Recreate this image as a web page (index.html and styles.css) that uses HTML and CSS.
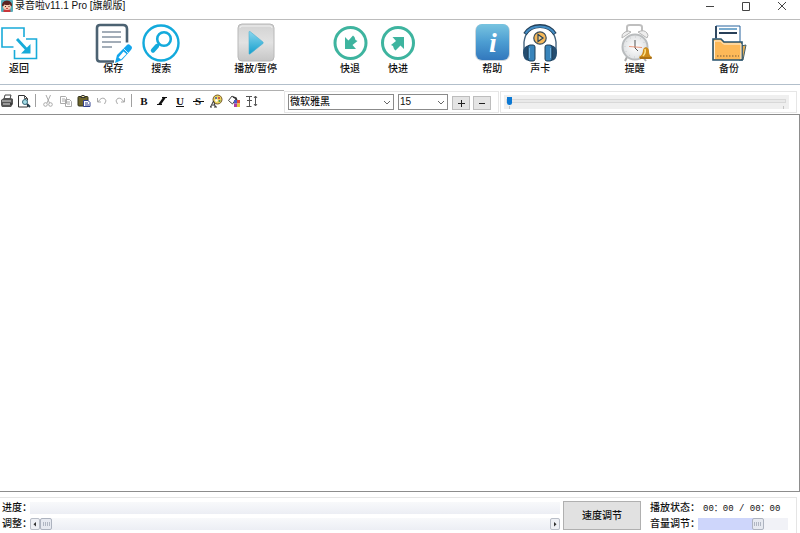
FILE: index.html
```html
<!DOCTYPE html>
<html lang="zh-CN">
<head>
<meta charset="utf-8">
<title>录音啦v11.1 Pro [旗舰版]</title>
<link rel="stylesheet" href="styles.css">
</head>
<body>
<header class="titlebar">
  <svg class="app-icon" viewBox="0 0 12 12" aria-hidden="true">
    <rect width="12" height="12" rx="1" fill="#58aebb"/>
    <path d="M2.500 12v-2q3.500-3 7 0v2z" fill="#c9363a"/>
    <ellipse cx="6" cy="6.500" rx="4" ry="3.500" fill="#f8c9b0"/>
    <path d="M1 6.500q-.5-5.500 5-6 5.500.5 5 6-2-1-2-2-3 1-5.500 0-.5 1.500-2.500 2z" fill="#5c2320"/>
    <path d="M4 6.500h1M7.500 6.500h1" stroke="#432"/>
    <path d="M5 8.500h2" stroke="#c44"/>
  </svg>
  <h1 class="title">录音啦v11.1 Pro [旗舰版]</h1>
  <div class="window-controls">
    <button aria-label="最小化"><svg viewBox="0 0 12 12"><path d="M2 6.500h8"/></svg></button>
    <button aria-label="最大化"><svg viewBox="0 0 12 12"><path d="M2.500 2.500h7v8h-7z"/></svg></button>
    <button aria-label="关闭"><svg viewBox="0 0 12 12"><path d="M2 2l8 8M10 2l-8 8"/></svg></button>
  </div>
</header>

<nav class="toolbar" aria-label="主工具栏">
  <div class="group">
    <button class="tool tool-edge">
      <svg viewBox="0 0 38 42" fill="none" stroke="#18abd9" stroke-width="1.600">
        <path d="M24 17V8H2v19h11.500"/>
        <path d="M26 19h10.500v19.500h-22V30"/>
        <path d="M17 19l11 12" stroke-width="2.800"/>
        <path d="M30.500 24v9.500h-9.500z" fill="#18abd9" stroke="none"/>
      </svg>
      <span>返回</span>
    </button>
  </div>
  <div class="group">
    <button class="tool">
      <svg viewBox="0 0 48 42" fill="none">
        <path d="M25 41.500H11q-3 0-3-3V8q0-3 3-3h23q4 0 4 4v13.500" stroke="#4c6272" stroke-width="2.600"/>
        <path d="M13 12h19M13 17h19M13 22h19M13 27h10" stroke="#a3adb8" stroke-width="2"/>
        <path d="M26 43l2-8 9-9q2-3 4.500-.5 3 2 0 5L33 40z" fill="#13a6ec"/>
        <path d="M29.500 37.500l2.500 2 5.500-5.500-3-2.500z" fill="#fff"/>
        <path d="M34.500 28.500l4.500 4.500" stroke="#fff" stroke-width=".8"/>
      </svg>
      <span>保存</span>
    </button>
    <button class="tool">
      <svg viewBox="0 0 48 42" fill="none" stroke="#13aadc">
        <circle cx="24" cy="23" r="17.500" stroke-width="2.400"/>
        <circle cx="27" cy="19" r="6.800" stroke-width="2.600"/>
        <path d="M22 24l-3 3" stroke-width="2.600"/>
        <path d="M20 26l-4 4.500" stroke-width="4.400" stroke-linecap="round"/>
      </svg>
      <span>搜索</span>
    </button>
  </div>
  <div class="group">
    <button class="tool">
      <svg viewBox="0 0 48 42">
        <defs>
          <linearGradient id="key" x2="0" y2="1"><stop stop-color="#d2d2d2"/><stop offset=".5" stop-color="#e2e2e2"/><stop offset="1" stop-color="#c6c6c6"/></linearGradient>
          <linearGradient id="tri" x2="0" y2="1"><stop stop-color="#8ad6ee"/><stop offset="1" stop-color="#159fcd"/></linearGradient>
        </defs>
        <rect x="6" y="4" width="36" height="37" rx="4" fill="url(#key)" stroke="#b8b8b8"/>
        <path d="M8 8q0-2 2-2h28q2 0 2 2" fill="none" stroke="#f2f2f2"/>
        <path d="M17 12q0-1 1-.5L31 22q.5 1 0 1.500L18 34q-1 .5-1-.5z" fill="url(#tri)" stroke="#4db2d2" stroke-width=".6"/>
      </svg>
      <span>播放/暂停</span>
    </button>
  </div>
  <div class="group">
    <button class="tool">
      <svg viewBox="0 0 48 42">
        <circle cx="24.500" cy="23" r="15.500" fill="none" stroke="#3eb49f" stroke-width="3"/>
        <path d="M19 29V17l3.500 3.500 4.500-5 1.500 1.500 1 3 2 1-5 4 3.500 4z" fill="#3eb49f"/>
      </svg>
      <span>快退</span>
    </button>
    <button class="tool">
      <svg viewBox="0 0 48 42">
        <circle cx="24" cy="23" r="15.500" fill="none" stroke="#3eb49f" stroke-width="3"/>
        <path d="M30 17v12l-3.500-3.500-5 5-1.500-1.500-1-3-2-1 5-4-3.500-4z" fill="#3eb49f"/>
      </svg>
      <span>快进</span>
    </button>
  </div>
  <div class="group">
    <button class="tool">
      <svg viewBox="0 0 48 42">
        <defs><linearGradient id="info" x2="0" y2="1"><stop stop-color="#78c4e0"/><stop offset=".5" stop-color="#4c9dd2"/><stop offset="1" stop-color="#3278bd"/></linearGradient></defs>
        <rect x="7" y="4" width="35" height="37" rx="7" fill="#ccd5db"/>
        <rect x="8" y="4" width="33" height="36" rx="6" fill="url(#info)"/>
        <text class="info-letter" x="25" y="32" text-anchor="middle">i</text>
      </svg>
      <span>帮助</span>
    </button>
    <button class="tool">
      <svg viewBox="0 0 48 42" fill="none">
        <path d="M8 33V22q2-15 16-15.500Q38 7 40 22v11" stroke="#45647e" stroke-width="1.400"/>
        <path d="M9 14Q14 6 24 6t15 8" stroke="#233f58" stroke-width="4"/>
        <path d="M9.500 13.500Q14 6.500 24 6.500t14.500 7" stroke="#448dc4" stroke-width="2"/>
        <path d="M15 25h-2q-6 1-6 8t6 8h2zM33 25h2q6 1 6 8t-6 8h-2z" fill="#244d70"/>
        <rect x="12" y="25" width="7" height="16" rx="2" fill="#3884bb" stroke="#203e57"/>
        <rect x="29" y="25" width="7" height="16" rx="2" fill="#3884bb" stroke="#203e57"/>
        <path d="M13.500 28v10M34.500 28v10" stroke="#71afd9"/>
        <circle cx="24" cy="18" r="6.200" fill="#f6b858" stroke="#394c5b" stroke-width="1.200"/>
        <path d="M22 14.500v7l5-3.500z" fill="#f8cf83" stroke="#294258" stroke-width="1.200"/>
      </svg>
      <span>声卡</span>
    </button>
  </div>
  <div class="group">
    <button class="tool">
      <svg viewBox="0 0 48 42">
        <defs><radialGradient id="dial"><stop stop-color="#fff"/><stop offset="1" stop-color="#dfe1e3"/></radialGradient></defs>
        <path d="M16 13V7q0-2 3-2h9q3 0 3 2v6" fill="none" stroke="#bfbfbf" stroke-width="2"/>
        <path d="M11 18q-1-4 3-6t6 0zM27 12q6-3 9 1 2 2 0 5z" fill="#eee" stroke="#b4b4b4"/>
        <path d="M16 37l-2 4M32 37l3 4" stroke="#aaa" stroke-width="2"/>
        <circle cx="24" cy="27" r="12.500" fill="url(#dial)" stroke="#b9bcbe" stroke-width="2"/>
        <circle cx="24" cy="27" r="10" fill="none" stroke="#c5c8ca" stroke-dasharray="1 4.200"/>
        <path d="M24 20v8l3 3" fill="none" stroke="#555"/>
        <path d="M18 26.500l13 1" stroke="#e47d5c" stroke-width=".8"/>
        <path d="M28 37q4-2 4-7 0-2 3-3 3 1 3 4 0 5 3 6l-1 2H29z" fill="#cc8b1a"/>
        <path d="M32 36q3-3 2-7" stroke="#ffe287" stroke-width="1.500" fill="none"/>
        <path d="M29 38h12" stroke="#8c560f"/>
      </svg>
      <span>提醒</span>
    </button>
  </div>
  <div class="group">
    <button class="tool">
      <svg viewBox="0 0 48 42">
        <path d="M36 26l5-1-3 15h-4z" fill="#e4ad55" stroke="#43606b"/>
        <path d="M11 20V6h24v22" fill="#fff" stroke="#27639d"/>
        <path d="M14 9h18" stroke="#4d8fbe" stroke-width="1.500"/>
        <path d="M14 13h18M11 6v12" stroke="#273f58" stroke-width="1.800"/>
        <path d="M8 40V19h8l3 3h18v18z" fill="#fdb958" stroke="#295470" stroke-width="1.600"/>
        <path d="M9.500 39V21h6l3 3H36v15" fill="none" stroke="#fff2dc"/>
        <path d="M12 36h22" stroke="#a47b43" stroke-width="1.500" stroke-dasharray="1.500 1.500"/>
      </svg>
      <span>备份</span>
    </button>
  </div>
</nav>

<div class="format-row">
  <div class="edit-tools" role="toolbar" aria-label="编辑">
    <button class="mini mini-edge" aria-label="打印"><svg viewBox="0 0 14 14"><path d="M4 5l1-4h6l-1 4" fill="#fff" stroke="#444"/><path d="M1 6l3-2h7l2 1v5l-2 3H2l-1-2z" fill="#555"/><path d="M2 7h9M3 10h7" stroke="#ddd"/><path d="M11 9v2" stroke="#222"/></svg></button>
    <button class="mini" aria-label="打印预览"><svg viewBox="0 0 14 14"><path d="M10.500 11v2h-9V1.500h6l3 3v2" fill="#fff" stroke="#333"/><path d="M7.500 1.500v3h3" fill="none" stroke="#555"/><circle cx="8" cy="8" r="2.500" fill="#a4dce5" stroke="#356879"/><path d="M10 10l3 3" stroke="#223b49" stroke-width="2"/></svg></button>
    <i class="sep"></i>
    <button class="mini" aria-label="剪切"><svg viewBox="0 0 14 14" fill="none" stroke="#aaa"><path d="M5 1l3.500 8M9.500 1L6 9"/><circle cx="4.500" cy="10.500" r="1.800"/><circle cx="9.500" cy="10.500" r="1.800"/></svg></button>
    <button class="mini" aria-label="复制"><svg viewBox="0 0 14 14" fill="#fff" stroke="#aaa"><path d="M1.500 2.500h5l1 1v6h-6zM6.500 5.500h4l2 2v5h-6z"/><path d="M3 5h3M3 7h3M8 8h3M8 10h3"/></svg></button>
    <button class="mini" aria-label="粘贴"><svg viewBox="0 0 14 14"><rect x="1" y="2.500" width="10" height="9.500" rx="1" fill="#6d652c" stroke="#333219"/><path d="M4 3.500V2h1l1-1 1 1h1v1.500z" fill="#eee5a0" stroke="#333"/><path d="M6.500 6.500H11l2 2v4H6.500z" fill="#fff" stroke="#304090"/><path d="M8 9h3M8 11h4" stroke="#304090"/></svg></button>
    <button class="mini" aria-label="撤销"><svg viewBox="0 0 14 14" fill="none" stroke="#aaa"><path d="M2.500 4v4H6M3 8q3-5 6.500-3.500 3 2 0 5.500"/></svg></button>
    <button class="mini" aria-label="重做"><svg viewBox="0 0 14 14" fill="none" stroke="#aaa"><path d="M11.500 4v4H8M11 8Q8 3 4.500 4.500q-3 2 0 5.500"/></svg></button>
    <i class="sep"></i>
    <button class="mini letter" aria-label="加粗"><b>B</b></button>
    <button class="mini" aria-label="斜体"><svg viewBox="0 0 14 14" fill="none" stroke="#111"><path d="M7 3.500h5M2 10.500h5"/><path d="M9.500 3.500l-5 7" stroke-width="2.400"/></svg></button>
    <button class="mini letter" aria-label="下划线"><u>U</u></button>
    <button class="mini letter" aria-label="删除线"><span class="strike">S</span></button>
    <button class="mini" aria-label="文字颜色"><svg viewBox="0 0 14 14"><ellipse cx="8.500" cy="5.500" rx="4.500" ry="4.500" fill="#ecd45d" stroke="#75592c"/><circle cx="7" cy="4" r="1" fill="#3658b0"/><circle cx="10" cy="4" r="1" fill="#c53842"/><circle cx="10.500" cy="7" r="1" fill="#43905a"/><circle cx="7.500" cy="6.500" r="1.300" fill="#fff"/><path d="M1.500 13l3-6 2 6M3 11h3M1 13h2M5 13h3" fill="none" stroke="#333"/></svg></button>
    <button class="mini" aria-label="填充颜色"><svg viewBox="0 0 14 14"><path d="M1.500 6.500L5 2l4 3-3.500 5z" fill="#fff" stroke="#444"/><path d="M6 3l3 1 1 3" fill="none" stroke="#333" stroke-width="1.500"/><path d="M7 6h3v3.500H7z" fill="#4b5bc5"/><path d="M10 6h3v3.500h-3z" fill="#df4b37"/><path d="M7 9.500h3V13H7z" fill="#b23f9c"/><path d="M10 9.500h3V13h-3z" fill="#e7c93f"/></svg></button>
    <button class="mini" aria-label="行距"><svg viewBox="0 0 14 14" fill="none" stroke="#555"><path d="M1 2.500h6M2 6.500h5M4.500 3v9M1.500 12.500h5M10.500 2v10M9 4l1.500-2L12 4M9 10l1.500 2 1.500-2"/></svg></button>
  </div>
  <div class="panel font-panel">
    <span class="combo combo-font">
      <select aria-label="字体"><option>微软雅黑</option></select>
      <svg viewBox="0 0 8 6"><path d="M1 1l3 3 3-3"/></svg>
    </span>
    <span class="combo combo-size">
      <select aria-label="字号"><option>15</option></select>
      <svg viewBox="0 0 8 6"><path d="M1 1l3 3 3-3"/></svg>
    </span>
    <button class="step" aria-label="增大字号"><svg viewBox="0 0 8 8"><path d="M1 4.500h7M4.500 1v7"/></svg></button>
    <button class="step" aria-label="减小字号"><svg viewBox="0 0 8 8"><path d="M1 4.500h6"/></svg></button>
  </div>
  <div class="panel zoom-panel">
    <input class="zoom" type="range" min="0" max="100" value="0" aria-label="缩放">
  </div>
</div>

<textarea class="editor" aria-label="文本内容"></textarea>

<footer class="player">
  <div class="tracks">
    <label for="progress">进度：</label>
    <progress id="progress" class="bar" value="0" max="100"></progress>
    <label for="seek">调整：</label>
    <div class="bar seek">
      <button class="arrow" aria-label="向左"><svg viewBox="0 0 8 8"><path d="M5 2v4.500L2.500 4.250z"/></svg></button>
      <input id="seek" type="range" min="0" max="100" value="0">
      <button class="arrow" aria-label="向右"><svg viewBox="0 0 8 8"><path d="M3 2v4.500l2.500-2.250z"/></svg></button>
    </div>
  </div>
  <button class="speed">速度调节</button>
  <div class="status">
    <span>播放状态：</span>
    <output class="time">00：00 / 00：00</output>
    <label for="volume">音量调节：</label>
    <input id="volume" class="bar volume" type="range" min="0" max="100" value="69">
  </div>
</footer>
</body>
</html>
```

FILE: styles.css
```css
* {
  box-sizing: border-box;
}

body {
  display: flex;
  flex-direction: column;
  height: 100vh;
  margin: 0;
  overflow: hidden;
  background: #fff;
  color: #111;
  font: 10px/12px "Liberation Sans", "Noto Sans CJK SC", sans-serif;
}

button,
input,
select,
textarea {
  margin: 0;
  padding: 0;
  border: 0;
  background: none;
  color: inherit;
  font: inherit;
}

/* Title bar */
.titlebar {
  display: flex;
  align-items: flex-start;
  height: 20px;
  border-bottom: 1px solid #bcbcbc;
}

.app-icon {
  width: 12px;
  height: 12px;
  margin: 0 2px 0 1px;
}

.title {
  margin: 0;
  font-size: 10px;
  font-weight: 400;
  white-space: nowrap;
}

.window-controls {
  display: flex;
  margin-left: auto;
}

.window-controls button {
  width: 36px;
  height: 12px;
}

.window-controls svg {
  display: block;
  width: 12px;
  height: 12px;
  margin: 0 auto;
  fill: none;
  stroke: #444;
}

/* Main toolbar */
.toolbar {
  display: flex;
  justify-content: space-between;
  height: 65px;
  padding-right: 47px;
  border-bottom: 1px solid #b2bfcb;
}

.group {
  display: flex;
}

.tool {
  display: flex;
  flex-direction: column;
  align-items: center;
  width: 48px;
  font-weight: 500;
  white-space: nowrap;
}

.tool-edge {
  width: 43px;
  padding-right: 5px;
}

.tool svg {
  width: 100%;
  height: 42px;
  margin-bottom: 1px;
  overflow: visible;
}

.info-letter {
  fill: #fff;
  font: italic bold 28px "Liberation Serif", serif;
}

/* Formatting row */
.format-row {
  display: flex;
  height: 29px;
  padding: 5px 3px 0 0;
}

.edit-tools {
  display: flex;
  align-items: flex-start;
  width: 284px;
  padding-top: 3px;
  border-top: 1px solid #b0b0b0;
}

.mini {
  width: 18px;
  height: 14px;
}

.mini-edge {
  width: 15px;
}

.mini svg {
  display: block;
  width: 14px;
  height: 14px;
  margin: 0 auto;
}

.mini-edge svg {
  margin: 0;
}

.sep {
  width: 1px;
  height: 13px;
  margin: 0 3px 0 2px;
  background: #a0a0a0;
}

.letter {
  font: bold 11px/13px "Liberation Serif", serif;
}

.strike {
  display: inline-block;
  width: 11px;
  background: linear-gradient(#111, #111) center / 100% 1px no-repeat;
}

.panel {
  display: flex;
  align-items: center;
  height: 22px;
  margin-top: 1px;
  border: 1px solid #e6e6e6;
}

.font-panel {
  width: 215px;
  padding-left: 3px;
  gap: 4px;
}

.combo {
  position: relative;
  height: 16px;
}

.combo-font {
  width: 106px;
}

.combo-size {
  width: 50px;
}

.combo select {
  appearance: none;
  display: block;
  width: 100%;
  height: 16px;
  padding: 0 1px;
  border: 1px solid #8b8b8b;
  border-radius: 0;
  font-weight: 500;
  line-height: 14px;
}

.combo svg {
  position: absolute;
  top: 6px;
  right: 3px;
  width: 8px;
  height: 6px;
  fill: none;
  stroke: #666;
  pointer-events: none;
}

.step {
  display: grid;
  place-items: center;
  width: 18px;
  height: 14px;
  margin-top: 2px;
  border: 1px solid #bdbdbd;
  background: #e4e4e4;
}

.step + .step {
  margin-left: -1px;
}

.step svg {
  width: 8px;
  height: 8px;
  fill: none;
  stroke: #222;
}

.zoom-panel {
  flex: 1;
  margin-left: 1px;
  padding: 0 7px 0 3px;
}

.zoom {
  appearance: none;
  width: 100%;
  height: 14px;
  background:
    linear-gradient(#c4c4c4, #c4c4c4) 5px 11px / 1px 3px no-repeat,
    linear-gradient(#c4c4c4, #c4c4c4) right 5px top 11px / 1px 3px no-repeat,
    #efefef;
}

.zoom::-webkit-slider-runnable-track {
  height: 4px;
  margin: 0 3px 3px 2px;
  border: 1px solid #d8d8d8;
  background: #e9e9e9;
}

.zoom::-webkit-slider-thumb {
  appearance: none;
  width: 5px;
  height: 8px;
  margin-top: -3px;
  border-radius: 0 0 3px 3px;
  background: #0b78d3;
}

/* Document area */
.editor {
  flex: 1;
  min-height: 0;
  padding: 4px;
  border: solid #8d8d8d;
  border-width: 1px 1px 1px 0;
  outline: 0;
  resize: none;
}

/* Player controls */
.player {
  display: flex;
  height: 36px;
  margin: 5px 3px 0 0;
  border: 1px solid #e5e5e5;
  border-width: 1px 1px 0 0;
}

.tracks {
  display: grid;
  flex: 1;
  grid-template-columns: 28px 1fr;
  grid-auto-rows: 12px;
  align-content: start;
  row-gap: 4px;
  padding: 4px 3px 0 2px;
}

.tracks label,
.status label,
.status span {
  font-weight: 500;
  white-space: nowrap;
}

.bar {
  width: 100%;
  height: 12px;
  background: linear-gradient(#f8f9fb, #eceef4);
}

progress {
  appearance: none;
  border: 0;
}

progress::-webkit-progress-bar {
  background: transparent;
}

.seek {
  display: flex;
}

.seek input {
  appearance: none;
  flex: 1;
  min-width: 0;
  height: 12px;
}

.arrow {
  width: 10px;
  height: 12px;
  border: 1px solid #b9bec8;
  border-radius: 2px;
  background: #eef0f5;
}

.arrow svg {
  display: block;
  width: 8px;
  height: 8px;
  fill: #333;
}

.seek input::-webkit-slider-thumb,
.volume::-webkit-slider-thumb {
  appearance: none;
  width: 12px;
  height: 12px;
  border: 1px solid #adb3bf;
  border-radius: 2px;
  background:
    repeating-linear-gradient(90deg, #b0b6c2 0 1px, transparent 1px 2px) center / 7px 4px no-repeat,
    #e6e9f0;
}

.speed {
  width: 78px;
  height: 29px;
  margin-top: 3px;
  border: 1px solid #b0b0b0;
  background: #e1e1e1;
  font-weight: 500;
}

.status {
  display: grid;
  grid-template-columns: 48px 90px;
  grid-auto-rows: 12px;
  align-content: start;
  row-gap: 4px;
  padding: 4px 8px 0 9px;
}

.time {
  padding-left: 5px;
  font-family: "Liberation Mono", "Noto Sans CJK SC", monospace;
  font-size: 9px;
  line-height: 14px;
  white-space: nowrap;
}

.volume {
  appearance: none;
  background: linear-gradient(90deg, #ced6fb 66%, #f1f2f7 66%);
}
```
